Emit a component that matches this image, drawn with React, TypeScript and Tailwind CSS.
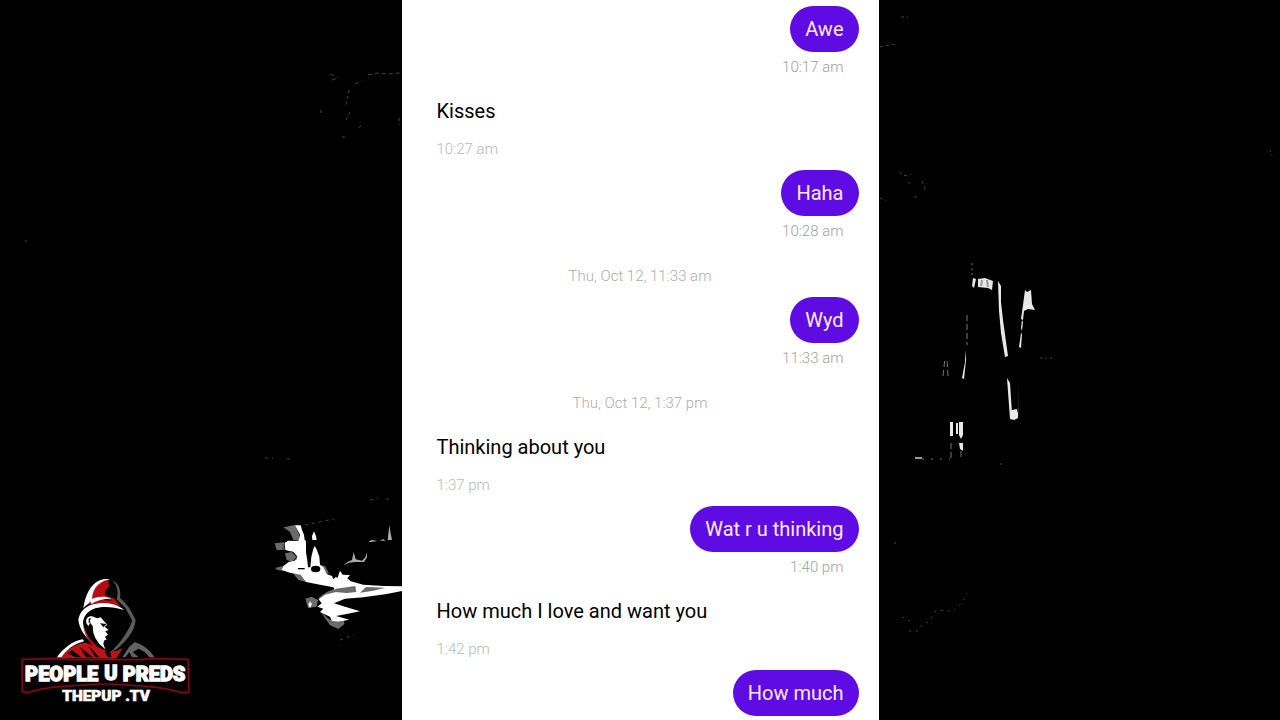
type Message = { kind: 'sent' | 'received'; text: string; time?: string }
type DateMark = { kind: 'date'; text: string }

const thread: (Message | DateMark)[] = [
  { kind: 'sent', text: 'Awe', time: '10:17 am' },
  { kind: 'received', text: 'Kisses', time: '10:27 am' },
  { kind: 'sent', text: 'Haha', time: '10:28 am' },
  { kind: 'date', text: 'Thu, Oct 12, 11:33 am' },
  { kind: 'sent', text: 'Wyd', time: '11:33 am' },
  { kind: 'date', text: 'Thu, Oct 12, 1:37 pm' },
  { kind: 'received', text: 'Thinking about you', time: '1:37 pm' },
  { kind: 'sent', text: 'Wat r u thinking', time: '1:40 pm' },
  { kind: 'received', text: 'How much I love and want you', time: '1:42 pm' },
  { kind: 'sent', text: 'How much' },
]

function Bubble({ message }: { message: Message }) {
  const sent = message.kind === 'sent'
  return (
    <li className={`flex flex-col pb-[11px] ${sent ? 'items-end' : 'items-start'}`}>
      <p
        className={`flex h-[46px] items-center rounded-full px-[15px] text-xl ${
          sent ? 'bg-[#5f0be3] text-[#fbeaff]' : 'text-black'
        }`}
      >
        {message.text}
      </p>
      {message.time && (
        <time className={`mt-[5px] px-[15px] text-[15px] leading-5 font-light ${sent ? 'text-[#a0a0a0]' : 'text-[#b8b8b8]'}`}>
          {message.time}
        </time>
      )}
    </li>
  )
}

function Backdrop() {
  return (
    <svg
      className="absolute inset-0 h-full w-full"
      viewBox="0 0 1280 720"
      preserveAspectRatio="xMidYMid slice"
      aria-hidden="true"
    >
      {/* left highlights */}
      <g transform="translate(230 440) scale(0.33333)">
        <g fill="#6a6a6a">
          <path d="M160 262L195 255 208 285 206 302 190 300 180 276ZM134 310L162 307 164 329 140 331ZM165 340L185 336 199 350 187 366 170 360ZM135 384L158 378 160 392 142 390ZM188 398L214 402 230 426 205 420Z" />
          <path d="M226 476L245 470 264 480 260 500 234 504ZM272 516L300 540 330 546 342 536 343 552 325 567 300 556ZM268 374L285 378 297 400 286 403ZM262 476L290 456 330 440 378 438 380 456 340 466Z" />
        </g>
        <path
          fill="#fff"
          d="M195 256L212 256 216 270 222 284 224 300 228 303 228 336 232 362 234 382 241 382 244 350 250 326 254 318 260 328 268 350 270 374 280 382 290 402 306 408 310 418 318 410 322 415 330 392 338 404 360 405 352 415 362 424 400 434 460 438 520 439 520 452 470 462 400 472 345 476 312 490 345 500 390 514 350 522 318 528 358 539 325 545 305 542 300 530 282 522 270 516 280 506 262 500 275 490 266 478 285 464 318 456 310 442 270 434 228 426 212 404 180 398 155 390 160 378 176 366 194 362 202 350 190 336 166 330 164 308 175 302 205 303 210 284Z"
        />
        <path fill="#fff" d="M252 274L258 288 260 300 247 300 246 288ZM240 484l6 8-6 12-5-10z" />
        <path fill="#6a6a6a" d="M318 446L376 438 379 456 350 459 306 455ZM408 441L466 443 430 452 390 458Z" />
        <ellipse cx="257" cy="387" rx="14" ry="10" fill="#000" />
        <path d="M204 386h20" stroke="#000" strokeWidth="4" />
        <path d="M157 312q8 8 0 16M184 334q20 8 14 26" stroke="#333" strokeWidth="2" fill="none" />
        <path fill="#aaa" d="M340 377L352 366 366 360 371 336 377 358 396 362 406 352 411 337 411 352 402 366 376 366 356 368ZM414 307L424 300 438 302 440 304ZM450 302L460 297 466 302ZM473 300L478 255 482 280 486 300Z" />
      </g>

      {/* right highlights */}
      <g fill="#e8e8e8">
        <path d="M973 278l3 1-2 9-2-2zM978 279l7-1 8 3-1 9-4-2-10-1zM998 281l3 5 0 16 2 18 5 36-3 1-4-24-2-22zM1007 378l3 5 2 30 4 4 2-5 1-32-1 38-4 2-4-1zM1012 410l5-1 1 6-4 4-3-2z" />
        <path d="M1025 290l2 2 4-2 1 14 3 6-7-1-4 2-1 9-2-1 2-14zM1022 320l1 2-1 9-1-3zM1021 333l1 1-1 14-2-1zM965 350l1 10-2 19-2-1 3-16zM950 422h3v14h-3zM956 423h2v11h-2zM959 422h4v13l-2 4-2-4zM959 443h4v8l-3-2z" />
      </g>
      <path d="M982 280l-1 6M987 280l1 7M915 458h7" stroke="#999" strokeWidth="2" />
      <g fill="none" stroke="#777" strokeWidth="1">
        <path d="M943 376l2-18M948 376l-1-18M967 315v30M951 443v17M961 451v8" strokeDasharray="6 3" />
        <path d="M972 263v14" strokeDasharray="2 3" />
        <path d="M922 459h28" strokeDasharray="2 7" />
      </g>

      {/* faint specks */}
      <g fill="none" stroke="#444" strokeWidth="1">
        <path d="M368 75l10-2 10 1 13-1M330 74l7 3M332 80l7-2M355 84l7-3" strokeDasharray="4 3" />
        <path d="M349 90l-3 15M321 110v3M350 112l-4 8M361 126l-3 2M342 137h3M399 118v7" strokeDasharray="3 3" />
        <path d="M880 47l10-2 6-1M901 17h7M900 172l3 4 8-2M908 182l4 3M922 181l4 10M914 197h5M880 198l6 3" strokeDasharray="3 3" />
        <path d="M909 631h9l4-6 8-4 4-9 10-2 8 2 10-9 5-10M902 617l8 4" strokeDasharray="2 5" />
        <path d="M265 458h8M287 459h7M305 525l14-3 15-3M370 500l8-2M386 499h6M340 640l14-5" strokeDasharray="3 4" />
        <path d="M25 241h3M1270 150l2 6M1040 358h12M1000 464h4M894 543h3" strokeDasharray="2 3" />
      </g>
    </svg>
  )
}

function Logo() {
  return (
    <svg
      className="absolute bottom-[5px] left-2.5 h-[145px] w-[190px] font-['Roboto',sans-serif]"
      viewBox="0 0 570 435"
      role="img"
      aria-label="People U Preds"
    >
      {/* hood */}
      <path fill="#b90d14" d="M232 104C236 70 258 34 292 30C300 34 302 40 296 50C284 60 280 72 290 78L312 84 330 108 270 98Z" />
      <path fill="#080808" d="M294 34C312 40 324 60 324 84L300 82C284 76 290 62 298 50ZM246 92C262 82 290 82 306 92L280 90Z" />
      <path fill="#fff" d="M220 114C224 84 236 56 252 42C266 30 282 25 300 28C276 32 258 46 250 66C244 84 250 86 240 96Z" />
      <path fill="#fff" d="M240 90C262 78 284 78 304 86C280 86 262 90 244 102Z" />
      <path fill="#fff" d="M205 150C208 128 222 112 244 104C280 94 320 100 342 120C312 110 280 108 258 114C236 120 220 138 219 158C222 180 232 196 243 214C228 204 208 178 205 150Z" />
      <path fill="#b90d14" d="M219 160C224 190 240 212 262 228L250 230C236 216 220 188 219 160Z" />
      <path fill="#5b5b5b" d="M306 30C326 38 334 62 330 84C340 92 352 104 360 118L377 150C374 184 350 212 322 236L298 250C324 224 350 196 367 152L346 114 320 88C326 66 322 46 306 30Z" />
      {/* face */}
      <path fill="#fff" d="M228 152C230 142 238 137 246 139L262 145 272 142 282 154 292 164 284 170 296 180 286 184 294 194 285 200 290 208 282 212 280 222 286 238 268 222 256 204 250 188 248 168 240 158 236 168 230 162Z" />
      <path fill="#080808" d="M236 146L244 144 239 152 242 158 236 158ZM270 160L290 162 280 172Z" />
      {/* shoulders */}
      <path fill="#c11118" d="M150 264C170 236 200 220 226 218L262 230 290 244 316 244 338 234 318 266Z" />
      <path fill="#090909" d="M186 240L214 262 196 262 172 250ZM208 230L250 262 228 262ZM234 226L268 262 256 262ZM284 246L300 240 304 262 294 262Z" />
      <path fill="#fff" d="M140 263C160 234 190 212 219 208L222 214C192 222 170 238 154 262Z" />
      <path fill="#626262" d="M337 262L357 231 374 216C396 222 420 240 434 262L418 262 404 246 386 236 368 246 386 262 366 262 358 246 346 262Z" />

      {/* name plate */}
      <path
        fill="#080002"
        stroke="#7f0717"
        strokeWidth="5"
        strokeLinejoin="round"
        d="M36 268l112-3 27 4h219l27-4 113 3 3 98-22 2q-35-12-101-19l-110-7H267l-110 7q-66 5-105 19l-15-3z"
      />
      <g className="font-black" fill="#fff" stroke="#fff" textAnchor="middle">
        <text x="155" y="333" fontSize="60" strokeWidth="4">PEOPLE</text>
        <text x="303" y="329" fontSize="60" strokeWidth="4">U</text>
        <text x="432" y="333" fontSize="60" strokeWidth="4">PREDS</text>
        <text x="288" y="394" fontSize="46" strokeWidth="2">THEPUP .TV</text>
      </g>
    </svg>
  )
}

export default function App() {
  return (
    <main className="relative h-screen overflow-hidden bg-black font-['Roboto',sans-serif]">
      <Backdrop />
      <section className="relative mx-auto h-full w-full max-w-[477px] overflow-hidden bg-white px-5 pt-1.5" aria-label="Chat">
        <ol>
          {thread.map((item, i) =>
            item.kind === 'date' ? (
              <li key={i} className="flex h-[45px] items-center justify-center pt-1 text-[15px] font-light text-[#acacac]">
                {item.text}
              </li>
            ) : (
              <Bubble key={i} message={item} />
            )
          )}
        </ol>
      </section>
      <Logo />
    </main>
  )
}
